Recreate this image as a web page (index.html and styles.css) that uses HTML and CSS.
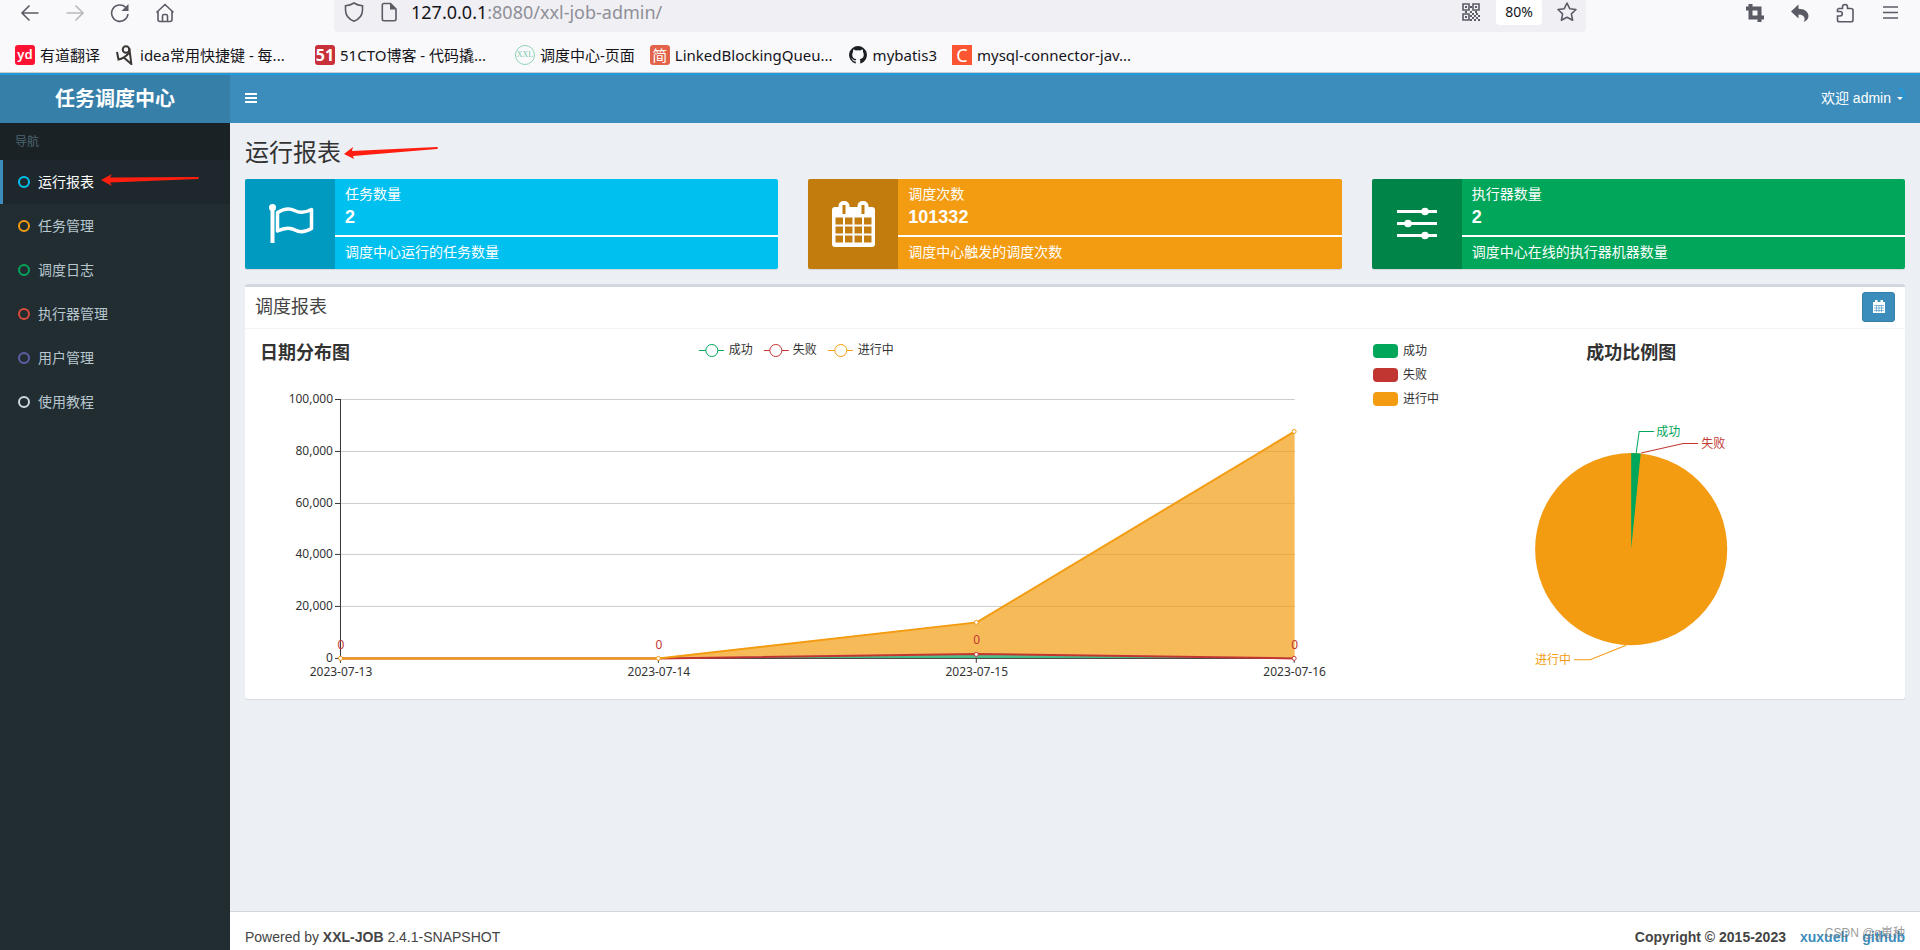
FILE: index.html
```html
<!DOCTYPE html>
<html lang="zh-CN">
<head>
<meta charset="utf-8">
<title>任务调度中心</title>
<link rel="stylesheet" href="styles.css">
</head>
<body>
<div class="browser">
  <div class="toolbar">
    <div class="tools">
      <button class="tool" aria-label="后退"><svg width="20" height="20" viewBox="0 0 20 20"><path d="M18.500 10H2M9.500 2.500L2 10l7.500 7.500"/></svg></button>
      <button class="tool disabled" aria-label="前进"><svg width="20" height="20" viewBox="0 0 20 20"><path d="M1.500 10H18M10.500 2.500L18 10l-7.500 7.500"/></svg></button>
      <button class="tool" aria-label="刷新"><svg width="20" height="20" viewBox="0 0 20 20"><path d="M18 11A8.200 8.200 0 1 1 15.500 4.200"/><path class="solid" d="M18.500 1v7h-7z"/></svg></button>
      <button class="tool" aria-label="主页"><svg width="20" height="20" viewBox="0 0 20 20"><path d="M1.500 9.500L10 1.500l8.500 8M3 8.500v8q0 2 2 2h10q2 0 2-2v-8M7.500 18v-5q0-1.500 1.500-1.500h2q1.500 0 1.500 1.500v5"/></svg></button>
    </div>
    <div class="urlbar">
      <svg class="line-icon" width="20" height="20" viewBox="0 0 20 20"><path d="M10 1C13 3 15.500 3.500 18.500 3.700V8C18.500 13 15.500 17 10 19.200C4.500 17 1.500 13 1.500 8V3.700C4.500 3.500 7 3 10 1Z"/></svg>
      <svg class="line-icon page-icon" width="20" height="20" viewBox="0 0 20 20"><path d="M5 1.500h6.500l5.500 5.500v10q0 1.700-1.700 1.700H5q-1.700 0-1.700-1.700V3.200Q3.300 1.500 5 1.500z"/><path class="solid" d="M11 1l6.500 6.500H11z"/></svg>
      <span class="url"><b>127.0.0.1</b>:8080/xxl-job-admin/</span>
      <svg class="line-icon" width="20" height="20" viewBox="0 0 20 20"><path d="M2 2h6v6H2zM12 2h6v6h-6zM2 12h6v6H2z"/><path class="solid" d="M4 4h2v2H4zM14 4h2v2h-2zM4 14h2v2H4zM9 4h2v2H9zM4 9h2v2H4zM9 9h2v2H9zM14 9h2v2h-2zM11 11h2v2h-2zM13 13h2v2h-2zM11 15h2v2h-2zM15 11h2v2h-2zM17 13h2v2h-2zM15 15h2v2h-2zM13 17h2v2h-2zM17 17h2v2h-2zM9 13h2v2H9zM9 17h2v2H9z"/></svg>
      <button class="zoom">80%</button>
      <svg class="line-icon" width="20" height="20" viewBox="0 0 20 20"><path stroke-linejoin="round" d="M10 1l2.700 5.700 6.300.800-4.600 4.300 1.200 6.400L10 15.200l-5.600 3 1.200-6.400L1 7.500l6.300-.800z"/></svg>
    </div>
    <div class="tools">
      <button class="tool" aria-label="截图"><svg width="20" height="20" viewBox="0 0 20 20"><path class="thick" d="M1 5.500h13.500V19M5.500 1v13.500H19"/></svg></button>
      <button class="tool" aria-label="撤销"><svg width="20" height="20" viewBox="0 0 20 20"><path class="solid" d="M8.500 1.500v4.200C14 5.700 18.500 8.500 18.500 13c0 3-2 5-5 6 2-2.500 2-7-5-7.500v4L1 8.500z"/></svg></button>
      <button class="tool" aria-label="扩展"><svg width="20" height="20" viewBox="0 0 20 20"><path d="M3.500 5.500h4V4a2.500 2.500 0 0 1 5 0v1.500H16q2 0 2 2v9.500q0 1.800-2 1.800H4.500q-2 0-2-1.800v-4H5a2.200 2.200 0 0 0 0-4.500H2.500V6.500z"/></svg></button>
      <button class="tool" aria-label="菜单"><svg width="20" height="20" viewBox="0 0 20 20"><path d="M3 4h15M3 9.500h15M3 15h15"/></svg></button>
    </div>
  </div>
  <nav class="bookmarks">
    <a class="bookmark" href="#"><span class="fav yd">yd</span><span>有道翻译</span></a>
    <a class="bookmark" href="#"><svg width="20" height="20" viewBox="0 0 20 20"><g fill="none" stroke="#3a3633" stroke-width="2"><circle cx="11" cy="4.500" r="3.300"/><path d="M2 7l1.500 7.500Q9 13.500 14 8M14.300 3l2 16-7-6"/></g></svg><span class="long">idea常用快捷键 - 每...</span></a>
    <a class="bookmark" href="#"><span class="fav cto">51</span><span class="long">51CTO博客 - 代码撬...</span></a>
    <a class="bookmark" href="#"><span class="fav xxl">XXL</span><span>调度中心-页面</span></a>
    <a class="bookmark" href="#"><span class="fav jian">简</span><span>LinkedBlockingQueu...</span></a>
    <a class="bookmark" href="#"><svg width="20" height="20" viewBox="0 0 16 16"><path fill="#1b1f23" d="M8 .8a7.200 7.200 0 0 0-2.300 14c.4.100.5-.2.500-.4v-1.300c-2 .4-2.400-.9-2.400-.9-.3-.8-.8-1-.8-1-.7-.5 0-.5 0-.5.700.1 1.100.800 1.100.800.6 1.100 1.700.8 2.100.6.100-.5.300-.8.500-1-1.600-.2-3.300-.8-3.300-3.600 0-.8.300-1.400.7-1.900 0-.2-.3-.9.100-1.900 0 0 .6-.2 2 .7a7 7 0 0 1 3.600 0c1.400-.9 2-.7 2-.7.4 1 .1 1.700.1 1.900.5.500.7 1.100.7 1.900 0 2.800-1.700 3.400-3.300 3.600.3.200.5.700.5 1.300v2c0 .2.100.5.500.4A7.200 7.200 0 0 0 8 .8z"/></svg><span>mybatis3</span></a>
    <a class="bookmark" href="#"><span class="fav csdn">C</span><span>mysql-connector-jav...</span></a>
  </nav>
</div>

<header class="header">
  <a class="logo" href="#">任务调度中心</a>
  <div class="navbar">
    <button class="toggle" aria-label="切换导航"><svg width="12" height="11" viewBox="0 0 12 11"><path fill="#fff" d="M0 0h12v2H0zM0 4h12v2H0zM0 8h12v2H0z"/></svg></button>
    <button class="user">欢迎 admin <span class="caret"></span></button>
  </div>
  <svg class="spinner" width="14" height="14" viewBox="0 0 14 14"><path d="M8 1A6 6 0 0 1 12 10.500" fill="none" stroke="#2299dd" stroke-width="2"/></svg>
</header>

<div class="shell">
  <aside class="sidebar">
    <div class="side-head">导航</div>
    <a class="side-item active" href="#"><i class="ring aqua"></i>运行报表</a>
    <a class="side-item" href="#"><i class="ring yellow"></i>任务管理</a>
    <a class="side-item" href="#"><i class="ring green"></i>调度日志</a>
    <a class="side-item" href="#"><i class="ring red"></i>执行器管理</a>
    <a class="side-item" href="#"><i class="ring purple"></i>用户管理</a>
    <a class="side-item" href="#"><i class="ring gray"></i>使用教程</a>
    <svg class="arrow arrow-side" width="100" height="14" viewBox="0 0 100 14"><path fill="#ff1e10" d="M1 7L12 1 10 4.500 98 4Q100 5 98 6L10 9.500 12 13z"/></svg>
  </aside>
  <div class="page">
    <main class="content">
      <h1 class="title">运行报表<svg class="arrow arrow-title" width="96" height="14" viewBox="0 0 96 14"><path fill="#ff1e10" d="M1 8L10 1 9 5 94 1Q96 2 94 3L10 10 11 13z"/></svg></h1>
      <div class="stats">
        <section class="stat aqua-bg">
          <div class="stat-icon"><svg width="90" height="90" viewBox="0 0 90 90"><circle cx="27.500" cy="28.500" r="3.500" fill="#fff"/><path d="M27.500 29v35" stroke="#fff" stroke-width="4"/><path d="M32.500 33.500Q42 27.500 49.500 31.500T66.500 30.500V49.500Q57 55 50 51T32.500 52Z" fill="none" stroke="#fff" stroke-width="3.500" stroke-linejoin="round"/></svg></div>
          <div class="stat-body"><div>任务数量</div><strong>2</strong><div class="rule"></div><div>调度中心运行的任务数量</div></div>
        </section>
        <section class="stat yellow-bg">
          <div class="stat-icon"><svg width="90" height="90" viewBox="0 0 90 90"><rect x="24" y="28" width="43" height="40" rx="3" fill="#fff"/><rect x="30.500" y="22" width="11" height="14" rx="5" fill="#fff"/><rect x="49.500" y="22" width="11" height="14" rx="5" fill="#fff"/><path fill="#c27d0e" d="M34.500 26h3v9h-3zM53.500 26h3v9h-3zM27.500 38.500H35v7h-7.500zM37 38.500h7.500v7H37zM46.500 38.500H54v7h-7.500zM56 38.500h7.500v7H56zM27.500 47.500H35v7h-7.500zM37 47.500h7.500v7H37zM46.500 47.500H54v7h-7.500zM56 47.500h7.500v7H56zM27.500 56.500H35v7h-7.500zM37 56.500h7.500v7H37zM46.500 56.500H54v7h-7.500zM56 56.500h7.500v7H56z"/></svg></div>
          <div class="stat-body"><div>调度次数</div><strong>101332</strong><div class="rule"></div><div>调度中心触发的调度次数</div></div>
        </section>
        <section class="stat green-bg">
          <div class="stat-icon"><svg width="90" height="90" viewBox="0 0 90 90"><path d="M25 32.500h40M25 44.500h40M25 56.500h40" stroke="#fff" stroke-width="3"/><g fill="#fff"><circle cx="53" cy="32.500" r="3.800"/><circle cx="36" cy="44.500" r="3.800"/><circle cx="53" cy="56.500" r="3.800"/></g></svg></div>
          <div class="stat-body"><div>执行器数量</div><strong>2</strong><div class="rule"></div><div>调度中心在线的执行器机器数量</div></div>
        </section>
      </div>

      <section class="box">
        <div class="box-head">
          <h2>调度报表</h2>
          <button class="date-btn" aria-label="选择日期"><svg width="12" height="13" viewBox="0 0 12 13"><path fill="#fff" d="M0 2h2V0h2.500v2h3V0H10v2h2v11H0z"/><path stroke="#3c8dbc" d="M1 5.500h10M1 8h10M1 10.500h10M3.500 5v7M6 5v7M8.500 5v7" stroke-width=".6"/></svg></button>
        </div>
        <div class="charts">
          <svg class="chart" viewBox="0 0 1107 370" role="img" aria-label="日期分布图">
            <text class="chart-title" x="15" y="30">日期分布图</text>
            <g class="legend">
              <g stroke="#00a65a"><path d="M454 21.500h25"/><circle cx="467" cy="21.500" r="6"/></g><text x="484" y="25">成功</text>
              <g stroke="#c23632"><path d="M519 21.500h25"/><circle cx="531" cy="21.500" r="6"/></g><text x="548" y="25">失败</text>
              <g stroke="#f39c12"><path d="M583 21.500h25"/><circle cx="596" cy="21.500" r="6"/></g><text x="613" y="25">进行中</text>
            </g>
            <path class="grid" d="M95 70.500h955M95 122.500h955M95 174.500h955M95 225.500h955M95 277.500h955"/>
            <path class="axis" d="M95.500 70v264M90 70.500h5M90 122.500h5M90 174.500h5M90 225.500h5M90 277.500h5M90 329.500h960M413.500 329v5M731.500 329v5M1049.500 329v5"/>
            <g class="label" text-anchor="end"><text x="88" y="74">100,000</text><text x="88" y="126">80,000</text><text x="88" y="178">60,000</text><text x="88" y="229">40,000</text><text x="88" y="281">20,000</text><text x="88" y="333">0</text></g>
            <g class="label" text-anchor="middle"><text x="96" y="347">2023-07-13</text><text x="414" y="347">2023-07-14</text><text x="732" y="347">2023-07-15</text><text x="1050" y="347">2023-07-16</text></g>
            <path fill="#00a65a" opacity=".7" d="M413 329L732 325 1050 329z"/>
            <path fill="#f39c12" opacity=".7" d="M413 329L732 293 1050 103V329L732 325z"/>
            <g fill="none" stroke-width="2"><path stroke="#c23632" d="M95.500 329.500h318L732 325l318 4.500"/><path stroke="#f39c12" d="M95.500 329.500h318L732 293.500l318-191"/></g>
            <g fill="#fff" stroke="#f39c12"><circle cx="95.500" cy="329.500" r="2"/><circle cx="413.500" cy="329.500" r="2"/><circle cx="731.500" cy="293.500" r="2"/><circle cx="1049.500" cy="102.500" r="2"/></g>
            <g fill="#fff" stroke="#c23632"><circle cx="731.500" cy="325.500" r="2"/><circle cx="1049.500" cy="329.500" r="2"/></g>
            <g class="label failed" text-anchor="middle"><text x="96" y="320">0</text><text x="414" y="320">0</text><text x="732" y="315">0</text><text x="1050" y="320">0</text></g>
          </svg>
          <svg class="chart" viewBox="0 0 553 370" role="img" aria-label="成功比例图">
            <g><rect x="21" y="15" width="25" height="14" rx="4" fill="#00a65a"/><rect x="21" y="39" width="25" height="14" rx="4" fill="#c23632"/><rect x="21" y="63" width="25" height="14" rx="4" fill="#f39c12"/></g>
            <g class="label"><text x="51" y="26">成功</text><text x="51" y="50">失败</text><text x="51" y="74">进行中</text></g>
            <text class="chart-title" x="279" y="30" text-anchor="middle">成功比例图</text>
            <circle cx="279" cy="220" r="96" fill="#f39c12"/>
            <path fill="#00a65a" d="M279 220V124a96 96 0 0 1 9.500.500z"/>
            <g fill="none"><path stroke="#00a65a" d="M284 124l3-21.500h15"/><path stroke="#c23632" d="M289 124l42-9.500h15"/><path stroke="#f39c12" d="M274 316l-36 14.500h-16"/></g>
            <g class="slice-label"><text x="304" y="107" fill="#00a65a">成功</text><text x="349" y="119" fill="#c23632">失败</text><text x="219" y="335" fill="#f39c12" text-anchor="end">进行中</text></g>
          </svg>
        </div>
      </section>
    </main>
    <footer class="footer">
      <div>Powered by <b>XXL-JOB</b> 2.4.1-SNAPSHOT</div>
      <div class="copyright"><span>Copyright © 2015-2023</span><a href="#">xuxueli</a><a href="#">github</a></div>
      <span class="watermark">CSDN @g崽种</span>
    </footer>
  </div>
</div>
</body>
</html>
```
FILE: styles.css
```css
* { box-sizing: border-box; }
body {
  margin: 0;
  min-height: 100vh;
  display: flex;
  flex-direction: column;
  font: 14px/20px "Liberation Sans", "Noto Sans CJK SC", sans-serif;
  color: #333;
  background: #ecf0f5;
}
button { border: 0; padding: 0; margin: 0; background: none; font: inherit; color: inherit; cursor: pointer; }
a { text-decoration: none; color: inherit; }

/* browser chrome */
.browser {
  background: #f9f9fb;
  border-bottom: 1px solid #ccc;
  font-family: "Noto Sans", "Noto Sans CJK SC", sans-serif;
  color: #15141a;
}
.toolbar { display: flex; height: 32px; padding: 0 8px 0 7px; }
.tools { display: flex; padding-bottom: 7px; }
.tool { width: 45px; display: flex; align-items: center; justify-content: center; }
.tool svg, .line-icon { fill: none; stroke: #5b5b66; stroke-width: 1.6px; flex: none; }
.tool .thick { stroke-width: 4px; }
.solid { fill: #5b5b66; stroke: none; }
.disabled { opacity: .4; }
.urlbar {
  flex: 1;
  margin: 0 146px 0 147px;
  padding: 0 9px 8px 10px;
  display: flex;
  align-items: center;
  background: #f0f0f4;
  border-radius: 0 0 4px 4px;
}
.page-icon { margin: 0 12px 0 15px; }
.url { flex: 1; font-size: 18px; color: #8f8f98; }
.url b { font-weight: 400; color: #15141a; }
.zoom { width: 46px; height: 26px; margin: 0 15px; background: #fff; border-radius: 4px; font-size: 14px; }
.bookmarks { display: flex; gap: 15px; height: 40px; padding: 5px 15px 0; font-size: 15px; white-space: nowrap; }
.bookmark { display: flex; align-items: center; gap: 5px; }
.long { width: 160px; }
.fav { width: 20px; height: 20px; border-radius: 3px; color: #fff; text-align: center; font-size: 13px; line-height: 20px; }
.yd { background: #fc1333; font-weight: 600; line-height: 18px; }
.cto { background: #c8303a; font-weight: 700; font-size: 16px; }
.xxl { border: 1px solid #8fd3b6; border-radius: 50%; color: #7cc9aa; font: 8px/18px "Liberation Serif", serif; }
.jian { background: #e2624a; font-size: 15px; }
.csdn { background: #fc5531; border-radius: 0; font-size: 18px; }

/* header */
.header { position: relative; display: flex; height: 50px; background: #3c8dbc; color: #fff; border-top: 2px solid #2299dd; }
.logo { width: 230px; background: #367fa9; text-align: center; font-size: 20px; font-weight: 700; line-height: 48px; }
.navbar { flex: 1; display: flex; justify-content: space-between; align-items: center; padding: 0 17px 2px 15px; }
.toggle { display: flex; }
.user { display: flex; align-items: center; gap: 6px; }
.caret { border: 3px solid transparent; border-top-color: #fff; border-bottom: 0; }
.spinner { position: absolute; right: 15px; top: 13px; }

/* frame */
.shell { flex: 1; display: flex; }
.sidebar { position: relative; width: 230px; background: #222d32; color: #b8c7ce; }
.side-head { height: 37px; padding: 0 15px; background: #1a2226; color: #4b646f; font-size: 12px; line-height: 38px; }
.side-item { display: flex; align-items: center; gap: 8px; height: 44px; padding-left: 15px; border-left: 3px solid transparent; }
.active { background: #1e282c; border-left-color: #3c8dbc; color: #fff; }
.ring { width: 12px; height: 12px; border: 2px solid; border-radius: 50%; }
.aqua { color: #00c0ef; }
.yellow { color: #f39c12; }
.green { color: #00a65a; }
.red { color: #dd4b39; }
.purple { color: #605ca8; }
.gray { color: #d2d6de; }
.arrow { position: absolute; }
.arrow-side { left: 100px; top: 50px; }
.arrow-title { left: 102%; top: 6px; }
.page { flex: 1; display: flex; flex-direction: column; min-width: 0; }
.content { flex: 1; padding: 17px 15px 15px; }
.title { position: relative; width: max-content; margin: 0 0 13px; font-size: 24px; line-height: 26px; font-weight: 400; }

/* info boxes */
.stats { display: grid; grid-template-columns: repeat(3, 1fr); gap: 30px; margin-bottom: 15px; }
.stat { display: flex; color: #fff; border-radius: 2px; box-shadow: 0 1px 1px rgba(0, 0, 0, .1); overflow: hidden; }
.stat-icon { width: 90px; height: 90px; background: rgba(0, 0, 0, .2); }
.stat-body { flex: 1; padding: 5px 10px; }
.stat strong { display: block; font-size: 18px; line-height: 26px; }
.rule { height: 2px; margin: 5px -10px; background: #fff; }
.aqua-bg { background: #00c0ef; }
.yellow-bg { background: #f39c12; }
.green-bg { background: #00a65a; }

/* report box */
.box { background: #fff; border-top: 3px solid #d2d6de; border-radius: 3px; box-shadow: 0 1px 1px rgba(0, 0, 0, .1); }
.box-head { display: flex; justify-content: space-between; align-items: center; height: 42px; padding: 0 10px 2px; border-bottom: 1px solid #f4f4f4; }
.box-head h2 { margin: 0; font-size: 18px; font-weight: 400; color: #444; }
.date-btn { display: flex; align-items: center; justify-content: center; width: 33px; height: 30px; background: #3c8dbc; border: 1px solid #367fa9; border-radius: 3px; }
.charts { display: grid; grid-template-columns: 2fr 1fr; }
.chart { display: block; width: 100%; font-family: "Noto Sans", "Noto Sans CJK SC", sans-serif; font-size: 12px; fill: #333; }
.chart-title { font-size: 18px; font-weight: 700; }
.legend path { fill: none; }
.legend circle { fill: #fff; }
.grid { stroke: #ccc; }
.axis { stroke: #333; fill: none; }
.failed { fill: #c23632; }

/* footer */
.footer { position: relative; display: flex; justify-content: space-between; padding: 15px 15px 3px; background: #fff; border-top: 1px solid #d2d6de; color: #444; }
.copyright { display: flex; gap: 14px; font-weight: 700; }
.copyright a { color: #3c8dbc; }
.watermark { position: absolute; right: 15px; top: 11px; font-size: 12px; color: rgba(110, 110, 110, .7); }
```
